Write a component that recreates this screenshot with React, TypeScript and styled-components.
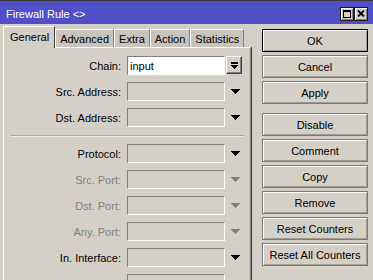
import React from 'react';
import styled, { createGlobalStyle, css } from 'styled-components';

const GlobalStyle = createGlobalStyle`
  html, body {
    margin: 0;
    padding: 0;
    background: #d4d0c8;
    overflow: hidden;
  }
  body {
    font-family: "Liberation Sans", Arial, sans-serif;
    font-size: 11px;
    color: #000;
  }
`;

const Window = styled.div`
  width: 373px;
  height: 280px;
  display: flex;
  flex-direction: column;
  overflow: hidden;
  background: #d4d0c8;
`;

const TitleBar = styled.div`
  flex-shrink: 0;
  height: 24px;
  box-sizing: border-box;
  border-top: 1px solid #3a3a3a;
  background: #4f4fc8;
  color: #fff;
  display: flex;
  align-items: center;
  justify-content: space-between;
  padding: 2px 5px 0 6px;
`;

const Title = styled.span`
  font-size: 11px;
`;

const TitleButtons = styled.div`
  display: flex;
`;

const TitleButton = styled.div`
  width: 14px;
  height: 14px;
  box-sizing: border-box;
  background: #d4d0c8;
  border: 1px solid #1e1e1e;
  box-shadow: inset 1px 1px 0 #fff, inset -1px -1px 0 #808080;
  display: flex;
  align-items: center;
  justify-content: center;
`;

const Body = styled.div`
  flex: 1;
  display: flex;
  align-items: flex-start;
  padding-left: 3px;
`;

const LeftColumn = styled.div`
  width: 248px;
  margin-top: 2px;
  display: flex;
  flex-direction: column;
`;

const TabBar = styled.div`
  display: flex;
  align-items: flex-end;
  height: 21px;
  position: relative;
  z-index: 1;
`;

const Tab = styled.div<{ $active?: boolean }>`
  box-sizing: border-box;
  display: flex;
  align-items: center;
  border-top: 1px solid #fff;
  border-left: 1px solid #fff;
  border-right: 1px solid #808080;
  ${(p) =>
    p.$active
      ? css`
          height: 22px;
          margin-bottom: -1px;
          padding: 0 5px 1px 6px;
          background: #d4d0c8;
          border-right-color: #404040;
        `
      : css`
          height: 18px;
          padding: 0 4px;
          background: #c9c5bd;
        `}
`;

const Panel = styled.div`
  height: 260px;
  box-sizing: border-box;
  border-top: 1px solid #fff;
  border-left: 1px solid #fff;
  border-right: 1px solid #808080;
  box-shadow: 1px 0 0 #404040;
  padding-top: 8px;
  display: flex;
  flex-direction: column;
  gap: 7px;
`;

const Row = styled.div`
  display: flex;
  align-items: center;
  height: 19px;
`;

const Label = styled.div<{ $disabled?: boolean }>`
  width: 117px;
  margin-right: 6px;
  text-align: right;
  color: ${(p) => (p.$disabled ? '#808080' : '#000')};
  white-space: nowrap;
`;

const Field = styled.div<{ $white?: boolean }>`
  width: 98px;
  height: 19px;
  box-sizing: border-box;
  border-top: 1px solid #808080;
  border-left: 1px solid #808080;
  border-bottom: 1px solid #fff;
  border-right: 1px solid #fff;
  background: ${(p) => (p.$white ? '#fff' : 'transparent')};
  padding-left: 2px;
  display: flex;
  align-items: center;
`;

const ArrowCell = styled.div`
  width: 18px;
  height: 19px;
  margin-left: 1px;
  display: flex;
  align-items: center;
  justify-content: center;
`;

const DropButton = styled.div`
  width: 16px;
  height: 18px;
  margin-left: 1px;
  margin-top: -1px;
  box-sizing: border-box;
  border-top: 1px solid #fff;
  border-left: 1px solid #fff;
  border-bottom: 1px solid #404040;
  border-right: 1px solid #404040;
  box-shadow: inset -1px -1px 0 #808080;
  display: flex;
  align-items: center;
  justify-content: center;
`;

const Separator = styled.div`
  height: 2px;
  box-sizing: border-box;
  border-top: 1px solid #aaa69f;
  border-bottom: 1px solid #eeece6;
  margin: 1px 6px 0 7px;
`;

const RightColumn = styled.div`
  width: 106px;
  margin-left: 11px;
  margin-top: 5px;
  display: flex;
  flex-direction: column;
  gap: 3px;
`;

const Button = styled.div<{ $default?: boolean; $spaced?: boolean }>`
  height: 23px;
  box-sizing: border-box;
  border: 1px solid ${(p) => (p.$default ? '#000' : '#7a7a7a')};
  box-shadow: inset 1px 1px 0 #fff, inset -1px -1px 0 #a09c95;
  display: flex;
  align-items: center;
  justify-content: center;
  margin-top: ${(p) => (p.$spaced ? '6px' : '0')};
`;

const DownArrow = ({ color }: { color: string }) => (
  <svg width="9" height="5" viewBox="0 0 9 5" shapeRendering="crispEdges">
    <rect x="0" y="0" width="9" height="1" fill={color} />
    <rect x="1" y="1" width="7" height="1" fill={color} />
    <rect x="2" y="2" width="5" height="1" fill={color} />
    <rect x="3" y="3" width="3" height="1" fill={color} />
    <rect x="4" y="4" width="1" height="1" fill={color} />
  </svg>
);

const DropIcon = () => (
  <svg width="7" height="7" viewBox="0 0 7 7" shapeRendering="crispEdges">
    <rect x="0" y="0" width="7" height="2" fill="#000" />
    <rect x="0" y="3" width="7" height="1" fill="#000" />
    <rect x="1" y="4" width="5" height="1" fill="#000" />
    <rect x="2" y="5" width="3" height="1" fill="#000" />
    <rect x="3" y="6" width="1" height="1" fill="#000" />
  </svg>
);

const MaxIcon = () => (
  <svg width="8" height="8" viewBox="0 0 8 8" shapeRendering="crispEdges">
    <rect x="0" y="0" width="8" height="2" fill="#000" />
    <rect x="0" y="0" width="1" height="8" fill="#000" />
    <rect x="7" y="0" width="1" height="8" fill="#000" />
    <rect x="0" y="7" width="8" height="1" fill="#000" />
  </svg>
);

const CloseIcon = () => (
  <svg width="8" height="7" viewBox="0 0 8 7">
    <path d="M1 0.5 L7 6.5 M7 0.5 L1 6.5" stroke="#000" strokeWidth="1.8" />
  </svg>
);

const tabs = ['General', 'Advanced', 'Extra', 'Action', 'Statistics'];

type FieldDef = { label: string; disabled?: boolean };

const topFields: FieldDef[] = [{ label: 'Src. Address:' }, { label: 'Dst. Address:' }];

const bottomFields: FieldDef[] = [
  { label: 'Protocol:' },
  { label: 'Src. Port:', disabled: true },
  { label: 'Dst. Port:', disabled: true },
  { label: 'Any. Port:', disabled: true },
  { label: 'In. Interface:' },
  { label: 'Out. Interface:' },
];

const buttons = [
  { text: 'OK', isDefault: true },
  { text: 'Cancel' },
  { text: 'Apply' },
  { text: 'Disable', spaced: true },
  { text: 'Comment' },
  { text: 'Copy' },
  { text: 'Remove' },
  { text: 'Reset Counters' },
  { text: 'Reset All Counters' },
];

const FieldRow = ({ label, disabled }: FieldDef) => (
  <Row>
    <Label $disabled={disabled}>{label}</Label>
    <Field />
    <ArrowCell>
      <DownArrow color={disabled ? '#808080' : '#000'} />
    </ArrowCell>
  </Row>
);

const App = () => {
  return (
    <>
      <GlobalStyle />
      <Window>
        <TitleBar>
          <Title>Firewall Rule &lt;&gt;</Title>
          <TitleButtons>
            <TitleButton>
              <MaxIcon />
            </TitleButton>
            <TitleButton>
              <CloseIcon />
            </TitleButton>
          </TitleButtons>
        </TitleBar>
        <Body>
          <LeftColumn>
            <TabBar>
              {tabs.map((t, i) => (
                <Tab key={t} $active={i === 0}>
                  {t}
                </Tab>
              ))}
            </TabBar>
            <Panel>
              <Row>
                <Label>Chain:</Label>
                <Field $white>input</Field>
                <DropButton>
                  <DropIcon />
                </DropButton>
              </Row>
              {topFields.map((f) => (
                <FieldRow key={f.label} {...f} />
              ))}
              <Separator />
              {bottomFields.map((f) => (
                <FieldRow key={f.label} {...f} />
              ))}
            </Panel>
          </LeftColumn>
          <RightColumn>
            {buttons.map((b) => (
              <Button key={b.text} $default={b.isDefault} $spaced={b.spaced}>
                {b.text}
              </Button>
            ))}
          </RightColumn>
        </Body>
      </Window>
    </>
  );
};

export default App;
